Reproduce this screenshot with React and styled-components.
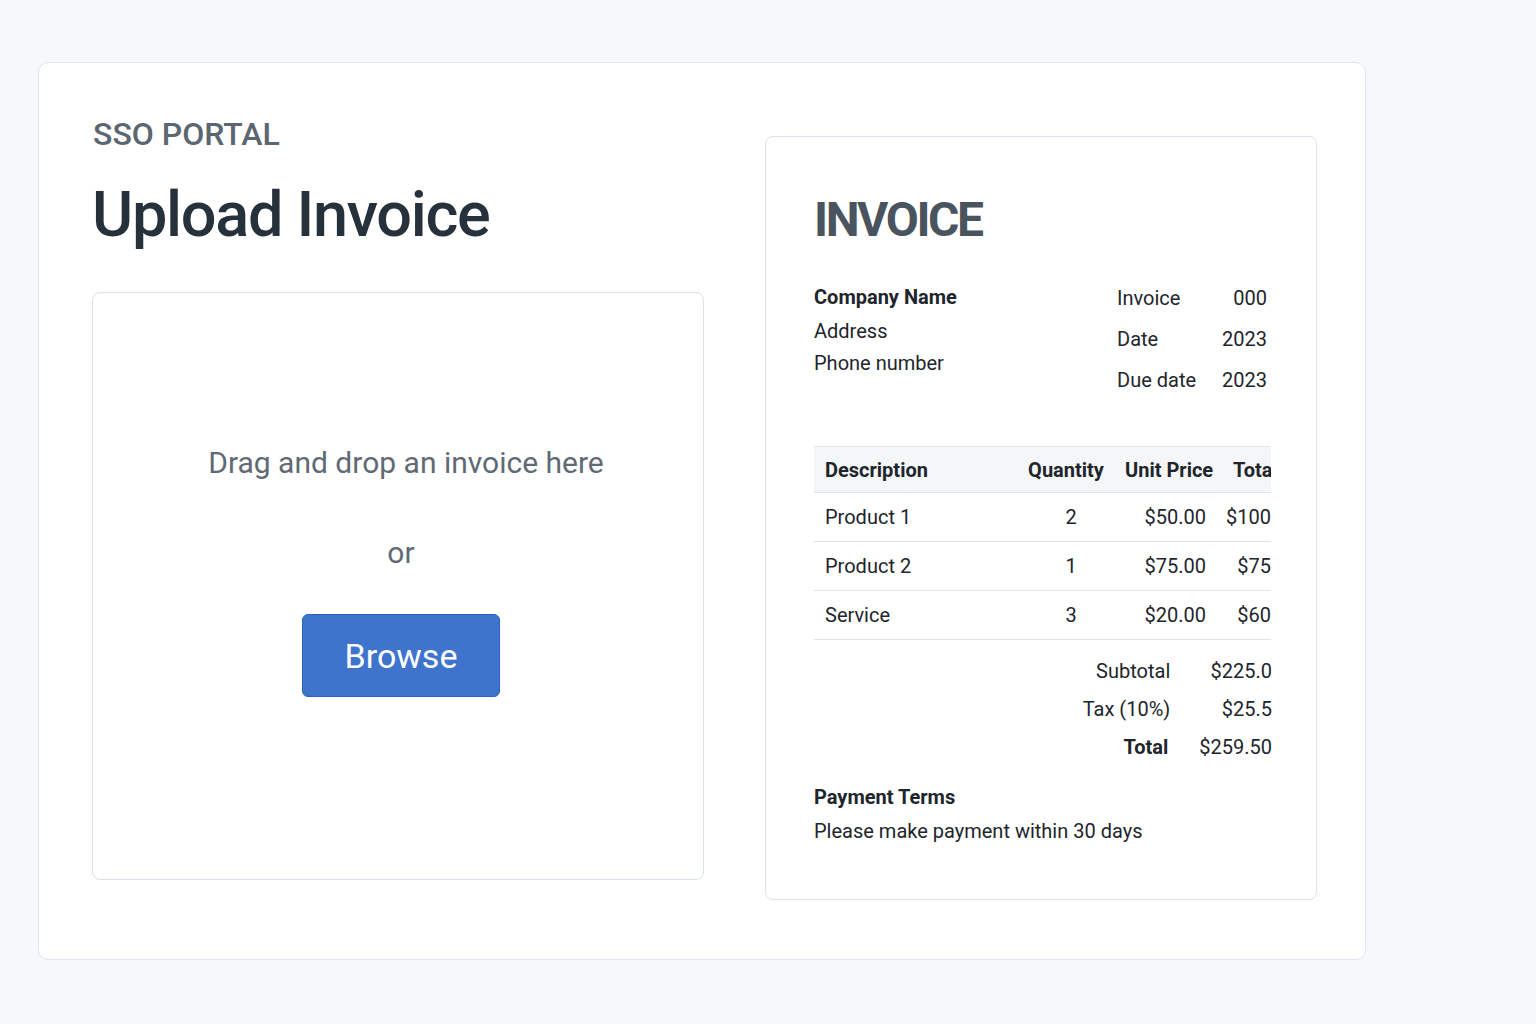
import React from "react"
import styled, { createGlobalStyle } from "styled-components"

const GlobalStyle = createGlobalStyle`
    html, body {
        margin: 0;
        padding: 0;
        background: #f6f8fa;
        font-family: Roboto, "Liberation Sans", Arial, sans-serif;
    }
    * { box-sizing: border-box; }
`

const items = [
    { name: "Product 1", qty: 2, price: "$50.00", total: "$100" },
    { name: "Product 2", qty: 1, price: "$75.00", total: "$75" },
    { name: "Service", qty: 3, price: "$20.00", total: "$60" },
]

const totals = [
    { label: "Subtotal", value: "$225.0" },
    { label: "Tax (10%)", value: "$25.5" },
    { label: "Total", value: "$259.50", strong: true },
]

const App = () => {
    return (
        <Page>
            <GlobalStyle />
            <Card>
                <LeftColumn>
                    <Eyebrow>SSO PORTAL</Eyebrow>
                    <Title>Upload Invoice</Title>
                    <DropZone>
                        <DropText shift="10px">Drag and drop an invoice here</DropText>
                        <OrText>or</OrText>
                        <BrowseButton>Browse</BrowseButton>
                    </DropZone>
                </LeftColumn>
                <InvoiceCard>
                    <InvoiceTitle>INVOICE</InvoiceTitle>
                    <InfoRow>
                        <Company>
                            <CompanyName>Company Name</CompanyName>
                            <CompanyLine>Address</CompanyLine>
                            <CompanyLine>Phone number</CompanyLine>
                        </Company>
                        <Meta>
                            <MetaLabel>Invoice</MetaLabel><MetaValue>000</MetaValue>
                            <MetaLabel>Date</MetaLabel><MetaValue>2023</MetaValue>
                            <MetaLabel>Due date</MetaLabel><MetaValue>2023</MetaValue>
                        </Meta>
                    </InfoRow>
                    <TableClip>
                        <HeadRow>
                            <Cell>Description</Cell>
                            <Cell align="center" pad="0 2px 0 0">Quantity</Cell>
                            <Cell pad="0 8px 0 5px">Unit Price</Cell>
                            <Cell pad="0 14px 0 14px">Total</Cell>
                        </HeadRow>
                        {items.map(item => (
                            <BodyRow key={item.name}>
                                <Cell>{item.name}</Cell>
                                <Cell align="center" pad="0 0 0 8px">{item.qty}</Cell>
                                <Cell align="right" pad="0 13px 0 5px">{item.price}</Cell>
                                <Cell align="right" pad="0 43px 0 0">{item.total}</Cell>
                            </BodyRow>
                        ))}
                    </TableClip>
                    <Totals>
                        {totals.map(t => (
                            <React.Fragment key={t.label}>
                                <TotalLabel strong={t.strong}>{t.label}</TotalLabel>
                                <TotalValue>{t.value}</TotalValue>
                            </React.Fragment>
                        ))}
                    </Totals>
                    <TermsTitle>Payment Terms</TermsTitle>
                    <TermsText>Please make payment within 30 days</TermsText>
                </InvoiceCard>
            </Card>
        </Page>
    )
}

export default App

const Page = styled.div`
    min-height: 1024px;
    padding: 62px 0 0 38px;
`
const Card = styled.div`
    width: 1328px;
    height: 898px;
    background: #ffffff;
    border: 1px solid #dfe6ee;
    border-radius: 10px;
    display: flex;
    align-items: flex-start;
    gap: 61px;
    padding: 0 0 0 53px;
`
const LeftColumn = styled.div`
    width: 612px;
    padding-top: 52px;
    display: flex;
    flex-direction: column;
`
const Eyebrow = styled.div`
    font-size: 32px;
    line-height: 38px;
    font-weight: 500;
    color: #5b6670;
    padding-left: 1px;
`
const Title = styled.h1`
    margin: 25px 0 0 0;
    font-size: 63px;
    line-height: 74px;
    font-weight: 500;
    letter-spacing: -1.3px;
    color: #27313b;
`
const DropZone = styled.div`
    margin-top: 40px;
    height: 588px;
    border: 1px solid #d9e1e9;
    border-radius: 8px;
    display: flex;
    flex-direction: column;
    align-items: center;
    padding: 152px 0 0 6px;
`
const DropText = styled.div`
    font-size: 30px;
    line-height: 36px;
    color: #5f6a75;
    margin-left: ${props => props.shift || "0"};
`
const OrText = styled(DropText)`
    margin-top: 54px;
`
const BrowseButton = styled.button`
    margin-top: 43px;
    width: 198px;
    height: 83px;
    background: #3f74cc;
    border: 1px solid #2c62c6;
    border-radius: 6px;
    color: #ffffff;
    font-family: Roboto, "Liberation Sans", Arial, sans-serif;
    font-size: 34px;
    padding: 0;
`
const InvoiceCard = styled.div`
    margin-top: 73px;
    width: 552px;
    height: 764px;
    border: 1px solid #dce3ea;
    border-radius: 8px;
    padding: 55px 0 0 48px;
    color: #1e252c;
    font-size: 20px;
`
const InvoiceTitle = styled.div`
    font-size: 48px;
    line-height: 56px;
    font-weight: 700;
    letter-spacing: -2.4px;
    color: #4a545e;
`
const InfoRow = styled.div`
    margin-top: 33px;
    width: 456px;
    display: flex;
    justify-content: space-between;
`
const Company = styled.div`
    display: flex;
    flex-direction: column;
`
const CompanyName = styled.div`
    font-weight: 700;
    line-height: 33.5px;
`
const CompanyLine = styled.div`
    line-height: 32.5px;
`
const Meta = styled.div`
    display: grid;
    grid-template-columns: auto auto;
    column-gap: 26px;
    grid-auto-rows: 40.7px;
    align-items: center;
    margin-top: -3px;
    padding-right: 3px;
`
const MetaLabel = styled.div``
const MetaValue = styled.div`
    text-align: right;
`
const TableClip = styled.div`
    margin-top: 46px;
    width: 457px;
    overflow: hidden;
`
const HeadRow = styled.div`
    width: 500px;
    height: 47px;
    display: grid;
    grid-template-columns: 200px 106px 99px 95px;
    align-items: center;
    background: #f4f6f8;
    border-top: 1px solid #e1e6eb;
    border-bottom: 1px solid #dfe5ea;
    font-weight: 700;
`
const BodyRow = styled(HeadRow)`
    height: 49px;
    background: transparent;
    border-top: none;
    font-weight: 400;
`
const Cell = styled.div`
    padding: ${props => props.pad || "0 0 0 11px"};
    text-align: ${props => props.align || "left"};
    white-space: nowrap;
`
const Totals = styled.div`
    margin-top: 12px;
    width: 458px;
    display: grid;
    grid-template-columns: auto auto;
    justify-content: end;
    column-gap: 29px;
    grid-auto-rows: 38px;
    align-items: center;
`
const TotalLabel = styled.div`
    text-align: right;
    font-weight: ${props => (props.strong ? 700 : 400)};
    padding-right: ${props => (props.strong ? "2px" : "0")};
`
const TotalValue = styled.div`
    text-align: right;
`
const TermsTitle = styled.div`
    margin-top: 14px;
    line-height: 34px;
    font-weight: 700;
`
const TermsText = styled.div`
    line-height: 34px;
`
